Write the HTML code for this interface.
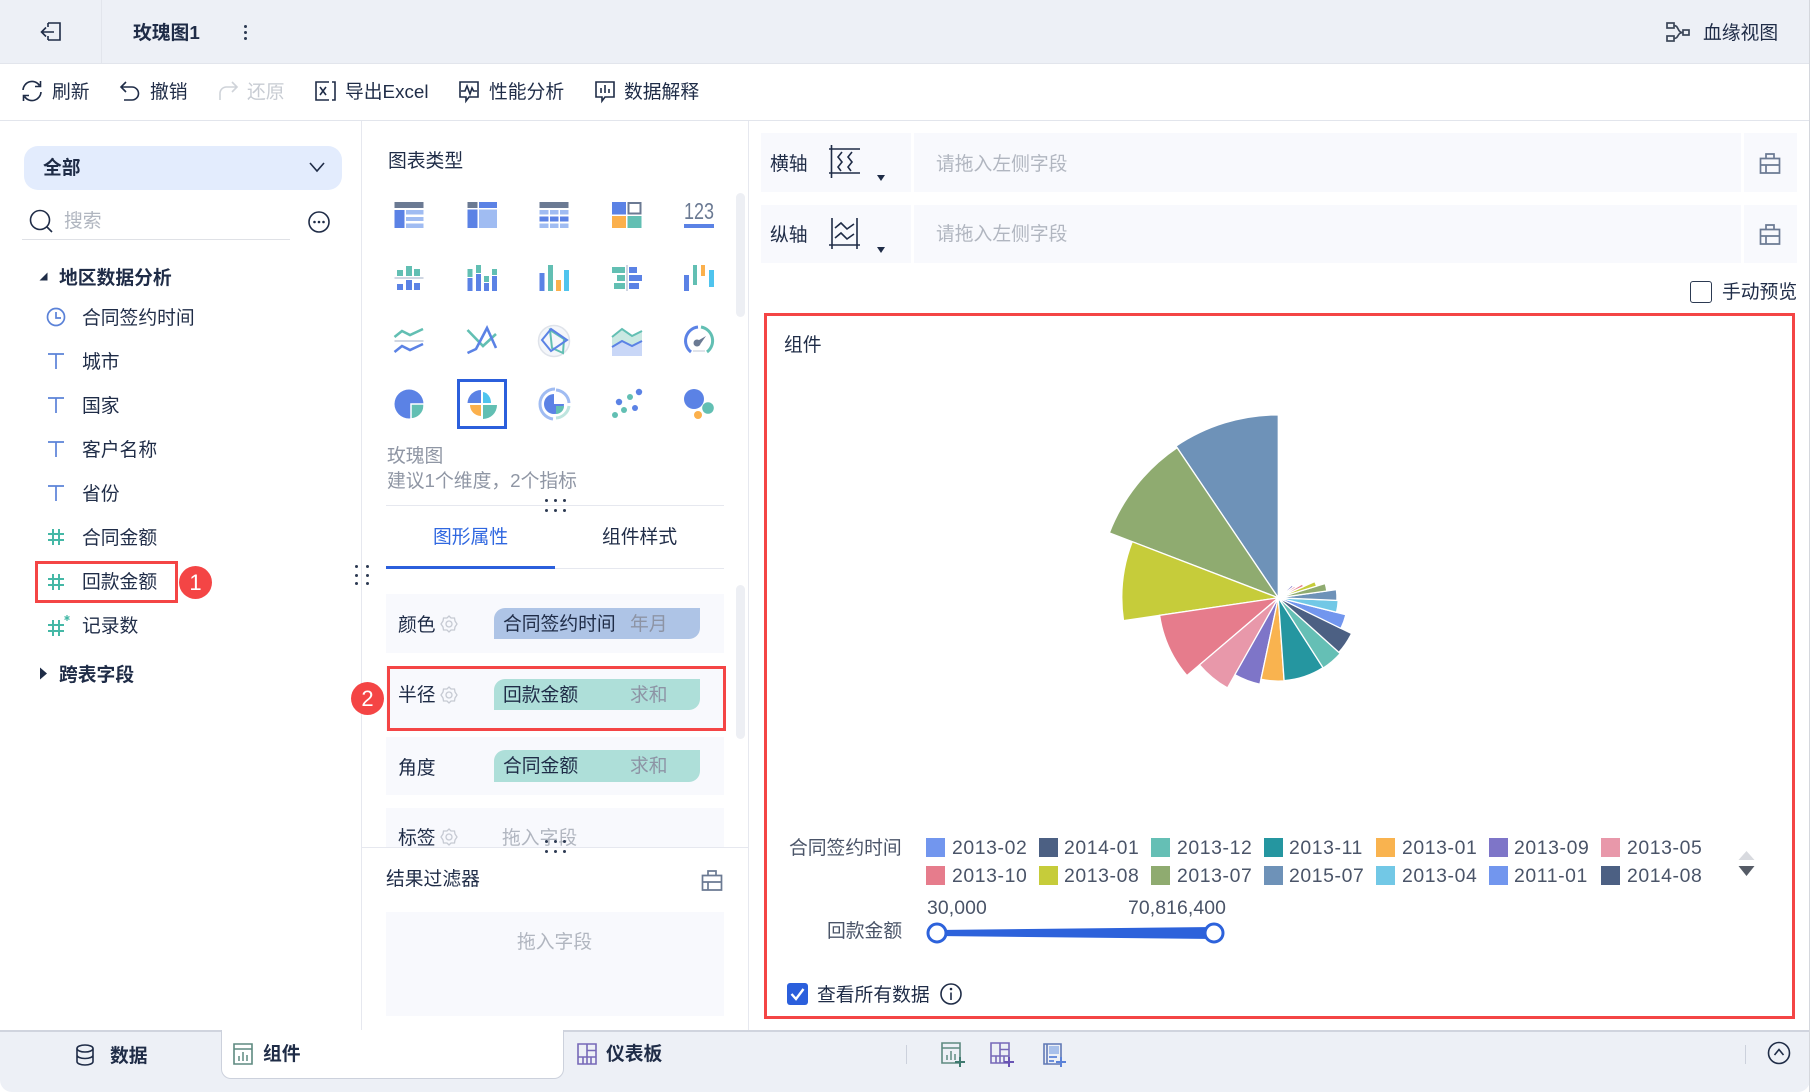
<!DOCTYPE html>
<html lang="zh"><head><meta charset="utf-8"><title>玫瑰图1</title>
<style>
html,body{margin:0;padding:0}
body{width:1810px;height:1092px;position:relative;overflow:hidden;background:#fff;font-family:"Liberation Sans","Noto Sans CJK SC",sans-serif;font-size:18.8px;color:#1f2c47}
.t{position:absolute;line-height:24px;height:24px;white-space:nowrap;margin-top:1px}
.b{font-weight:700}
.g{color:#b1b6c0}
.m{color:#8f96a4}
.r{position:absolute}
svg{position:absolute;overflow:visible}
.s{fill:none;stroke:#1f2c47;stroke-width:1.6}
.pill{position:absolute;left:494px;width:206px;border-radius:11px 0 11px 0}
.row{position:absolute;left:386px;width:338px;background:#f8f9fd}
.red{position:absolute;border:3px solid #f44545;box-sizing:border-box}
.num{position:absolute;width:33px;height:33px;border-radius:50%;background:#f44545;color:#fff;text-align:center;line-height:33px;font-size:22px;font-weight:500}
.sw{position:absolute;width:19px;height:19px}
.lg{position:absolute;line-height:24px;height:24px;white-space:nowrap;color:#4a5468;font-size:19.4px;letter-spacing:.6px;margin-top:1px}
.lv{position:absolute;line-height:24px;height:24px;white-space:nowrap;color:#4a5468;font-size:19.4px;letter-spacing:.1px;margin-top:1px}
.dot{position:absolute;width:3px;height:3px;border-radius:50%;background:#2c3a52}
</style></head><body>

<!-- header -->
<div class="r" style="left:0;top:0;width:1810px;height:63px;background:#edf0f6;border-bottom:1px solid #e2e5ec"></div>
<div class="r" style="left:101px;top:0;width:1px;height:63px;background:#e2e5ec"></div>
<svg style="left:40px;top:20px" width="24" height="24" viewBox="0 0 24 24"><path class="s" d="M8 3H20V20H8M8 3V7M8 16V20M1.500 12H14M6 7.500L1.500 12L6 16.500"/></svg>
<div class="t b" style="left:133px;top:20px">玫瑰图1</div>
<div class="dot" style="left:244px;top:25px"></div><div class="dot" style="left:244px;top:31px"></div><div class="dot" style="left:244px;top:37px"></div>
<svg style="left:1666px;top:20px" width="26" height="24" viewBox="0 0 26 24"><g class="s" style="stroke:#3c4658;stroke-width:1.7"><rect x="1" y="3" width="7" height="5"/><rect x="1" y="16" width="7" height="5"/><rect x="17" y="10" width="6" height="5"/><path d="M8 5.500C13 5.500 11 12.500 17 12.500C11 12.500 13 18.500 8 18.500"/></g></svg>
<div class="t" style="left:1703px;top:20px">血缘视图</div>

<!-- toolbar -->
<div class="r" style="left:0;top:120px;width:1810px;height:1px;background:#e2e5ec"></div>
<svg style="left:20px;top:79px" width="24" height="24" viewBox="0 0 24 24"><path class="s" d="M3 11A9 9 0 0 1 19.500 6.500M21 13A9 9 0 0 1 4.500 17.500M20.500 2V7.500H15M3.500 22V16.500H9"/></svg>
<div class="t" style="left:52px;top:79px">刷新</div>
<svg style="left:119px;top:79px" width="22" height="24" viewBox="0 0 22 24"><path class="s" d="M7 3L2 8L7 13M2 8H13A6.500 6.500 0 0 1 13 21H5"/></svg>
<div class="t" style="left:150px;top:79px">撤销</div>
<svg style="left:217px;top:79px" width="22" height="24" viewBox="0 0 22 24"><path class="s" style="stroke:#cfd3d9" d="M15 3L20 8L15 13M20 8H9A6.500 6.500 0 0 0 3 15V21"/></svg>
<div class="t" style="left:247px;top:79px;color:#c8ccd3">还原</div>
<svg style="left:314px;top:79px" width="22" height="24" viewBox="0 0 22 24"><path class="s" d="M15 3H2V21H15M18 3H21V21H18M6 8L12 16M12 8L6 16"/></svg>
<div class="t" style="left:345px;top:79px">导出Excel</div>
<svg style="left:458px;top:79px" width="22" height="24" viewBox="0 0 22 24"><path class="s" d="M2 3H20V18H11L8 22V18H2ZM3 12H7L9 7L12 15L14 9L15.500 12H19"/></svg>
<div class="t" style="left:489px;top:79px">性能分析</div>
<svg style="left:594px;top:79px" width="22" height="24" viewBox="0 0 22 24"><path class="s" d="M2 3H20V18H11L8 22V18H2ZM7 9V14M11 6V14M15 10V14"/></svg>
<div class="t" style="left:624px;top:79px">数据解释</div>

<!-- panel dividers -->
<div class="r" style="left:361px;top:121px;width:1px;height:909px;background:#e6e8ef"></div>
<div class="r" style="left:748px;top:121px;width:1px;height:909px;background:#e6e8ef"></div>

<!-- left panel -->
<div class="r" style="left:24px;top:146px;width:318px;height:44px;background:#e3ecfd;border-radius:14px"></div>
<div class="t b" style="left:43px;top:155px">全部</div>
<svg style="left:308px;top:161px" width="18" height="12" viewBox="0 0 18 12"><path class="s" d="M2 2L9 10L16 2"/></svg>
<svg style="left:29px;top:208px" width="24" height="26" viewBox="0 0 24 26"><circle class="s" cx="11" cy="12" r="9.500" stroke-width="1.8"/><path class="s" d="M18 19L23 24"/></svg>
<div class="t g" style="left:64px;top:208px">搜索</div>
<div class="r" style="left:22px;top:239px;width:268px;height:1px;background:#dfe1e6"></div>
<svg style="left:308px;top:211px" width="22" height="22" viewBox="0 0 22 22"><circle class="s" cx="11" cy="11" r="10"/><circle cx="6.500" cy="11" r="1.300" fill="#1f2c47"/><circle cx="11" cy="11" r="1.300" fill="#1f2c47"/><circle cx="15.500" cy="11" r="1.300" fill="#1f2c47"/></svg>

<svg style="left:39px;top:272px" width="9" height="9" viewBox="0 0 9 9"><path d="M8.500 0.500V8.500H0.500Z" fill="#1f2c47"/></svg>
<div class="t b" style="left:59px;top:265px">地区数据分析</div>
<svg style="left:46px;top:307px" width="20" height="20" viewBox="0 0 20 20"><circle cx="10" cy="10" r="8.500" fill="none" stroke="#5b82d8" stroke-width="1.700"/><path d="M10 5V11H15" fill="none" stroke="#5b82d8" stroke-width="1.700"/></svg>
<div class="t" style="left:82px;top:305px">合同签约时间</div>
<svg style="left:47px;top:352px" width="18" height="18" viewBox="0 0 18 18"><path d="M1 2H17M9 2V17" fill="none" stroke="#5b82d8" stroke-width="1.700"/></svg>
<div class="t" style="left:82px;top:349px">城市</div>
<svg style="left:47px;top:396px" width="18" height="18" viewBox="0 0 18 18"><path d="M1 2H17M9 2V17" fill="none" stroke="#5b82d8" stroke-width="1.700"/></svg>
<div class="t" style="left:82px;top:393px">国家</div>
<svg style="left:47px;top:440px" width="18" height="18" viewBox="0 0 18 18"><path d="M1 2H17M9 2V17" fill="none" stroke="#5b82d8" stroke-width="1.700"/></svg>
<div class="t" style="left:82px;top:437px">客户名称</div>
<svg style="left:47px;top:484px" width="18" height="18" viewBox="0 0 18 18"><path d="M1 2H17M9 2V17" fill="none" stroke="#5b82d8" stroke-width="1.700"/></svg>
<div class="t" style="left:82px;top:481px">省份</div>
<svg style="left:47px;top:528px" width="18" height="18" viewBox="0 0 18 18"><path d="M1 6H17M1 12H17M6 1V17M12 1V17" fill="none" stroke="#45b8a6" stroke-width="2"/></svg>
<div class="t" style="left:82px;top:525px">合同金额</div>
<svg style="left:47px;top:573px" width="18" height="18" viewBox="0 0 18 18"><path d="M1 6H17M1 12H17M6 1V17M12 1V17" fill="none" stroke="#45b8a6" stroke-width="2"/></svg>
<div class="t" style="left:82px;top:569px">回款金额</div>
<svg style="left:47px;top:615px" width="24" height="22" viewBox="0 0 24 22"><path d="M1 10H17M1 16H17M6 5V21M12 5V21" fill="none" stroke="#45b8a6" stroke-width="2"/><path d="M20 0V6M17.500 1.500L22.500 4.500M22.500 1.500L17.500 4.500" stroke="#45b8a6" stroke-width="1.200"/></svg>
<div class="t" style="left:82px;top:613px">记录数</div>
<svg style="left:39px;top:667px" width="9" height="13" viewBox="0 0 9 13"><path d="M1 0.500L8 6.500L1 12.500Z" fill="#1f2c47"/></svg>
<div class="t b" style="left:59px;top:662px">跨表字段</div>

<div class="red" style="left:35px;top:561px;width:143px;height:42px"></div>
<div class="num" style="left:179px;top:566px">1</div>
<div class="dot" style="left:355px;top:565px"></div><div class="dot" style="left:366px;top:565px"></div>
<div class="dot" style="left:355px;top:574px"></div><div class="dot" style="left:366px;top:574px"></div>
<div class="dot" style="left:355px;top:582px"></div><div class="dot" style="left:366px;top:582px"></div>

<!-- middle panel -->
<div class="t" style="left:388px;top:148px">图表类型</div>
<div class="r" style="left:736px;top:193px;width:9px;height:124px;background:#edeff4;border-radius:5px"></div>

<!-- chart type icons row 1 -->
<svg style="left:394px;top:200px" width="30" height="30" viewBox="0 0 30 30"><rect x="0.500" y="2" width="29" height="6" fill="#6b7a93"/><rect x="0.500" y="10" width="10" height="18" fill="#5b82e5"/><path d="M12 10H29.500V14.500H12ZM12 17H29.500V21H12ZM12 23.500H29.500V28H12Z" fill="#a0bcf2"/></svg>
<svg style="left:467px;top:200px" width="30" height="30" viewBox="0 0 30 30"><rect x="0.500" y="2" width="10" height="6" fill="#6b7a93"/><rect x="12" y="2" width="18" height="6" fill="#5b82e5"/><rect x="0.500" y="9.500" width="10" height="18.500" fill="#5b82e5"/><rect x="12" y="9.500" width="18" height="18.500" fill="#a0bcf2"/></svg>
<svg style="left:539px;top:200px" width="30" height="30" viewBox="0 0 30 30"><rect x="0.500" y="2" width="29" height="6" fill="#6b7a93"/><g fill="#a0bcf2"><rect x="0.500" y="10" width="9" height="4.500"/><rect x="11" y="10" width="8.500" height="4.500"/><rect x="21" y="10" width="8.500" height="4.500"/><rect x="0.500" y="23.500" width="9" height="4.500"/><rect x="11" y="23.500" width="8.500" height="4.500"/><rect x="21" y="23.500" width="8.500" height="4.500"/></g><g fill="#5b82e5"><rect x="0.500" y="16.500" width="9" height="5"/><rect x="11" y="16.500" width="8.500" height="5"/><rect x="21" y="16.500" width="8.500" height="5"/></g></svg>
<svg style="left:612px;top:200px" width="30" height="30" viewBox="0 0 30 30"><rect x="0" y="2" width="14" height="12.500" fill="#5b82e5"/><rect x="16.500" y="3" width="12" height="10.500" fill="none" stroke="#6b7a93" stroke-width="2"/><rect x="0" y="16" width="14" height="12" fill="#fbb04c"/><rect x="15.500" y="16" width="14" height="12" fill="#62bfb3"/></svg>
<svg style="left:684px;top:200px" width="30" height="30" viewBox="0 0 30 30"><text x="0" y="19" font-size="23" fill="#6b7a93" font-family="Liberation Sans" textLength="30" lengthAdjust="spacingAndGlyphs">123</text><rect x="0" y="24" width="30" height="4" fill="#5b82e5"/></svg>

<!-- row 2 -->
<svg style="left:394px;top:263px" width="30" height="30" viewBox="0 0 30 30"><g fill="#62bfb3"><rect x="3" y="7" width="6" height="6"/><rect x="12" y="3" width="6" height="10"/><rect x="20" y="6" width="6" height="7"/></g><rect x="0.500" y="14" width="29" height="2" fill="#cfd6e2"/><g fill="#5b82e5"><rect x="3" y="21" width="6" height="6"/><rect x="12" y="17" width="6" height="10"/><rect x="20" y="20" width="6" height="7"/></g></svg>
<svg style="left:467px;top:263px" width="30" height="30" viewBox="0 0 30 30"><g fill="#62bfb3"><rect x="0.500" y="6" width="5" height="8"/><rect x="9" y="2" width="5" height="8"/><rect x="17" y="13" width="5" height="6"/><rect x="25" y="6" width="5" height="6"/></g><g fill="#5b82e5"><rect x="0.500" y="15" width="5" height="13"/><rect x="9" y="11" width="5" height="17"/><rect x="17" y="20" width="5" height="8"/><rect x="25" y="13" width="5" height="15"/></g></svg>
<svg style="left:539px;top:263px" width="30" height="30" viewBox="0 0 30 30"><rect x="0.500" y="10" width="5" height="18" fill="#5b82e5"/><rect x="9" y="2" width="5" height="26" fill="#62bfb3"/><rect x="17" y="17" width="5" height="11" fill="#fbb04c"/><rect x="25" y="7" width="5" height="21" fill="#4fc4ee"/></svg>
<svg style="left:612px;top:263px" width="30" height="30" viewBox="0 0 30 30"><rect x="14" y="2" width="2" height="26" fill="#cfd6e2"/><g fill="#62bfb3"><rect x="0" y="4" width="13" height="6"/><rect x="5" y="12" width="8" height="6"/><rect x="2" y="20" width="11" height="6"/></g><g fill="#5b82e5"><rect x="17" y="4" width="8" height="6"/><rect x="17" y="12" width="13" height="6"/><rect x="17" y="20" width="10" height="6"/></g></svg>
<svg style="left:684px;top:263px" width="30" height="30" viewBox="0 0 30 30"><rect x="0" y="12" width="5" height="16" fill="#5b82e5"/><rect x="9" y="2" width="4" height="20" fill="#62bfb3"/><rect x="17" y="2" width="4" height="11" fill="#fbb04c"/><rect x="25" y="7" width="5" height="17" fill="#4fc4ee"/></svg>

<!-- row 3 -->
<svg style="left:394px;top:326px" width="30" height="30" viewBox="0 0 30 30"><path d="M0.500 11L8 5L16 9L29 3" fill="none" stroke="#62bfb3" stroke-width="2.600"/><rect x="0.500" y="14" width="29" height="2" fill="#cfd6e2"/><path d="M0.500 26L8 20L16 24L29 18" fill="none" stroke="#5b82e5" stroke-width="2.600"/></svg>
<svg style="left:467px;top:326px" width="30" height="30" viewBox="0 0 30 30"><path d="M0.500 4L16 20L29 8" fill="none" stroke="#62bfb3" stroke-width="2.600"/><path d="M0.500 27L9 23L20 2L29 22" fill="none" stroke="#5b82e5" stroke-width="2.600"/></svg>
<svg style="left:539px;top:326px" width="30" height="30" viewBox="0 0 30 30"><circle cx="15" cy="15" r="15.500" fill="#f4f6fa" stroke="#dfe3ea" stroke-width="1.500"/><path d="M11 4L25 13L24 27L13 22Z" fill="none" stroke="#62bfb3" stroke-width="2"/><path d="M12 3L28 14L12 25L3 14Z" fill="none" stroke="#5b82e5" stroke-width="2"/></svg>
<svg style="left:612px;top:326px" width="30" height="30" viewBox="0 0 30 30"><path d="M0 11L10 3L20 10L30 5V20L20 22L10 17L0 23Z" fill="#cae8e2"/><path d="M0 11L10 3L20 10L30 5" fill="none" stroke="#62bfb3" stroke-width="2"/><path d="M0 21L10 15L20 20L30 15V30H0Z" fill="#c9d7f7"/><path d="M0 21L10 15L20 20L30 15" fill="none" stroke="#5b82e5" stroke-width="2"/></svg>
<svg style="left:684px;top:326px" width="30" height="30" viewBox="0 0 30 30"><path d="M7 26A14 14 0 0 1 14 1" fill="none" stroke="#5b82e5" stroke-width="3"/><path d="M17 1A14 14 0 0 1 23 26" fill="none" stroke="#62bfb3" stroke-width="3"/><path d="M10 17L22 10L15 20Z" fill="#6b7a93"/><circle cx="13" cy="17" r="3.500" fill="#6b7a93"/><rect x="9" y="24" width="12" height="2" fill="#dfe3ea"/></svg>

<!-- row 4 -->
<svg style="left:394px;top:389px" width="30" height="30" viewBox="0 0 30 30"><path d="M15 15V0.500A14.500 14.500 0 1 1 0.500 15A14.500 14.500 0 0 1 15 0.500Z" fill="#5b82e5"/><path d="M17 15H30V17A14 13 0 0 1 17 30Z" fill="#62bfb3" stroke="#fff" stroke-width="1.500"/></svg>
<svg style="left:467px;top:389px" width="30" height="30" viewBox="0 0 30 30"><path d="M14 1V14H0.500A13.500 13.500 0 0 1 14 1Z" fill="#5b82e5"/><path d="M16 3V14H24A9 11 0 0 0 16 3Z" fill="#4fc4ee"/><path d="M14 16V27A11 11 0 0 1 3 16Z" fill="#fbb04c"/><path d="M16 16H30A14 14 0 0 1 16 30Z" fill="#62bfb3"/></svg>
<svg style="left:539px;top:389px" width="30" height="30" viewBox="0 0 30 30"><path d="M15 0A15 15 0 0 0 0 15A15 15 0 0 0 13 30" fill="none" stroke="#a0bcf2" stroke-width="3" transform="translate(1 0)"/><path d="M17 1A14 14 0 0 1 30 14" fill="none" stroke="#a0bcf2" stroke-width="3"/><path d="M30 17A14 14 0 0 1 17 29" fill="none" stroke="#bfe5df" stroke-width="3"/><path d="M15 15V5A10 10 0 1 0 25 15Z" fill="#5b82e5"/><path d="M17 17H25A8 8 0 0 1 17 25Z" fill="#62bfb3"/></svg>
<svg style="left:612px;top:389px" width="30" height="30" viewBox="0 0 30 30"><g fill="#5b82e5"><circle cx="7" cy="13" r="3.200"/><circle cx="27" cy="3" r="3.200"/><circle cx="23" cy="19" r="3"/></g><g fill="#62bfb3"><circle cx="18" cy="8" r="3"/><circle cx="12" cy="21" r="3"/><circle cx="3" cy="26" r="3"/></g></svg>
<svg style="left:684px;top:389px" width="30" height="30" viewBox="0 0 30 30"><circle cx="10" cy="10" r="10" fill="#5b82e5"/><circle cx="24" cy="19" r="5.800" fill="#62bfb3"/><circle cx="14" cy="26" r="4" fill="#fbb04c"/></svg>
<div class="r" style="left:457px;top:379px;width:50px;height:50px;box-sizing:border-box;border:3px solid #2b5fdc"></div>

<div class="t m" style="left:387px;top:443px">玫瑰图</div>
<div class="t m" style="left:387px;top:468px">建议1个维度，2个指标</div>
<div class="r" style="left:386px;top:505px;width:338px;height:1px;background:#e6e8ef"></div>
<div class="dot" style="left:545px;top:499px"></div><div class="dot" style="left:554px;top:499px"></div><div class="dot" style="left:563px;top:499px"></div>
<div class="dot" style="left:545px;top:509px"></div><div class="dot" style="left:554px;top:509px"></div><div class="dot" style="left:563px;top:509px"></div>

<div class="t" style="left:433px;top:524px;color:#2f67e0">图形属性</div>
<div class="t" style="left:602px;top:524px">组件样式</div>
<div class="r" style="left:386px;top:568px;width:338px;height:1px;background:#e6e8ef"></div>
<div class="r" style="left:386px;top:566px;width:169px;height:3px;background:#2b5fdc"></div>
<div class="r" style="left:736px;top:585px;width:9px;height:154px;background:#edeff4;border-radius:5px"></div>

<div class="row" style="top:594px;height:59px"></div>
<div class="row" style="top:666px;height:65px"></div>
<div class="row" style="top:737px;height:58px"></div>
<div class="row" style="top:808px;height:39px"></div>

<div class="t" style="left:398px;top:612px">颜色</div>
<svg style="left:440px;top:615px" width="18" height="18" viewBox="0 0 18 18"><path d="M9 1L11 3L14.500 3L15 6L17 9L15 12L14.500 15L11 15L9 17L7 15L3.500 15L3 12L1 9L3 6L3.500 3L7 3Z" fill="none" stroke="#c6cad3" stroke-width="1.300"/><circle cx="9" cy="9" r="3" fill="none" stroke="#c6cad3" stroke-width="1.300"/></svg>
<div class="pill" style="top:608px;height:31px;background:#aec4e6"></div>
<div class="t" style="left:503px;top:611px">合同签约时间</div>
<div class="t" style="left:630px;top:611px;color:#8d94a5">年月</div>

<div class="t" style="left:398px;top:682px">半径</div>
<svg style="left:440px;top:686px" width="18" height="18" viewBox="0 0 18 18"><path d="M9 1L11 3L14.500 3L15 6L17 9L15 12L14.500 15L11 15L9 17L7 15L3.500 15L3 12L1 9L3 6L3.500 3L7 3Z" fill="none" stroke="#c6cad3" stroke-width="1.300"/><circle cx="9" cy="9" r="3" fill="none" stroke="#c6cad3" stroke-width="1.300"/></svg>
<div class="pill" style="top:679px;height:31px;background:#aedfd9"></div>
<div class="t" style="left:503px;top:682px">回款金额</div>
<div class="t" style="left:630px;top:682px;color:#8d94a5">求和</div>

<div class="t" style="left:398px;top:755px">角度</div>
<div class="pill" style="top:750px;height:32px;background:#aedfd9"></div>
<div class="t" style="left:503px;top:753px">合同金额</div>
<div class="t" style="left:630px;top:753px;color:#8d94a5">求和</div>

<div class="t" style="left:398px;top:825px">标签</div>
<svg style="left:440px;top:828px" width="18" height="18" viewBox="0 0 18 18"><path d="M9 1L11 3L14.500 3L15 6L17 9L15 12L14.500 15L11 15L9 17L7 15L3.500 15L3 12L1 9L3 6L3.500 3L7 3Z" fill="none" stroke="#c6cad3" stroke-width="1.300"/><circle cx="9" cy="9" r="3" fill="none" stroke="#c6cad3" stroke-width="1.300"/></svg>
<div class="t g" style="left:502px;top:825px">拖入字段</div>
<div class="r" style="left:362px;top:847px;width:386px;height:1px;background:#e6e8ef"></div>
<div class="dot" style="left:545px;top:840px"></div><div class="dot" style="left:554px;top:840px"></div><div class="dot" style="left:563px;top:840px"></div>
<div class="dot" style="left:545px;top:850px"></div><div class="dot" style="left:554px;top:850px"></div><div class="dot" style="left:563px;top:850px"></div>

<div class="red" style="left:387px;top:666px;width:339px;height:65px"></div>
<div class="num" style="left:351px;top:682px">2</div>

<div class="t" style="left:386px;top:866px">结果过滤器</div>
<svg style="left:701px;top:869px" width="22" height="22" viewBox="0 0 22 22"><path d="M1.500 6.500H20.500V21H1.500ZM7 6.500V2H15V6.500M1.500 13H20.500M7 13V21" fill="none" stroke="#6b7a93" stroke-width="1.700"/></svg>
<div class="r" style="left:386px;top:912px;width:338px;height:104px;background:#f8f9fd"></div>
<div class="t g" style="left:517px;top:929px">拖入字段</div>

<!-- axes -->
<div class="r" style="left:761px;top:133px;width:150px;height:59px;background:#f8f9fd"></div>
<div class="r" style="left:914px;top:133px;width:827px;height:59px;background:#f8f9fd"></div>
<div class="r" style="left:1744px;top:133px;width:53px;height:59px;background:#f8f9fd"></div>
<div class="r" style="left:761px;top:205px;width:150px;height:58px;background:#f8f9fd"></div>
<div class="r" style="left:914px;top:205px;width:827px;height:58px;background:#f8f9fd"></div>
<div class="r" style="left:1744px;top:205px;width:53px;height:58px;background:#f8f9fd"></div>
<div class="t" style="left:770px;top:151px">横轴</div>
<div class="t" style="left:770px;top:222px">纵轴</div>
<svg style="left:829px;top:145px" width="32" height="33" viewBox="0 0 32 33"><path class="s" d="M0 4H31M0 28H31M2.500 0V33M13 7L9 12L13 17L9 22L12 26M23 7L19 12L23 17L19 22L22 26"/></svg>
<svg style="left:829px;top:218px" width="32" height="32" viewBox="0 0 32 32"><path class="s" d="M0 27H31M3 0V31M28 0V31M6 10L12 5L18 11L25 6M6 20L12 15L18 21L25 16"/></svg>
<svg style="left:877px;top:175px" width="8" height="6" viewBox="0 0 8 6"><path d="M0 0H8L4 6Z" fill="#1f2c47"/></svg>
<svg style="left:877px;top:247px" width="8" height="6" viewBox="0 0 8 6"><path d="M0 0H8L4 6Z" fill="#1f2c47"/></svg>
<div class="t g" style="left:936px;top:151px">请拖入左侧字段</div>
<div class="t g" style="left:936px;top:221px">请拖入左侧字段</div>
<svg style="left:1759px;top:152px" width="22" height="22" viewBox="0 0 22 22"><path d="M1.500 6.500H20.500V21H1.500ZM7 6.500V2H15V6.500M1.500 13H20.500M7 13V21" fill="none" stroke="#6b7a93" stroke-width="1.700"/></svg>
<svg style="left:1759px;top:223px" width="22" height="22" viewBox="0 0 22 22"><path d="M1.500 6.500H20.500V21H1.500ZM7 6.500V2H15V6.500M1.500 13H20.500M7 13V21" fill="none" stroke="#6b7a93" stroke-width="1.700"/></svg>

<div class="r" style="left:1690px;top:281px;width:22px;height:22px;box-sizing:border-box;border:1.500px solid #2c3a52;border-radius:3px"></div>
<div class="t" style="left:1722px;top:279px">手动预览</div>

<!-- chart box -->
<div class="red" style="left:764px;top:313px;width:1031px;height:706px"></div>
<div class="t" style="left:784px;top:332px">组件</div>

<svg style="left:0;top:0" width="1810" height="1092" viewBox="0 0 1810 1092">
<g transform="translate(1278.300 597.800)" stroke="#fff" stroke-width="1.300">
<path fill="#6e92b8" d="M0 0V-183A183 183 0 0 0 -102.300 -151.700Z"/>
<path fill="#8fab70" d="M0 0L-101.200 -150.100A181 181 0 0 0 -169 -64.900Z"/>
<path fill="#c6cc3a" d="M0 0L-146.100 -56.100A156.500 156.500 0 0 0 -154.800 22.900Z"/>
<path fill="#e67c8c" d="M0 0L-118.700 17.500A120 120 0 0 0 -91.400 77.800Z"/>
<path fill="#e898aa" d="M0 0L-78.800 67.100A103.500 103.500 0 0 0 -50.800 90.200Z"/>
<path fill="#7e75c8" d="M0 0L-43.400 76.900A88.300 88.300 0 0 0 -18.400 86.400Z"/>
<path fill="#f9b34f" d="M0 0L-17.300 81.500A83.300 83.300 0 0 0 5.800 83.100Z"/>
<path fill="#2596a0" d="M0 0L5.800 82.800A83 83 0 0 0 44.700 69.900Z"/>
<path fill="#65bfb5" d="M0 0L44.900 70.200A83.300 83.300 0 0 0 61.900 55.700Z"/>
<path fill="#4c6083" d="M0 0L60.600 54.500A81.500 81.500 0 0 0 73.300 35.700Z"/>
<path fill="#7296ee" d="M0 0L62.600 30.600A69.700 69.700 0 0 0 67.600 16.900Z"/>
<path fill="#72c8e6" d="M0 0L58.200 14.500A60 60 0 0 0 59.900 2.600Z"/>
<path fill="#6e92b8" d="M0 0L58.600 2.600A58.700 58.700 0 0 0 58.100 -8.200Z"/>
<path fill="#8fab70" d="M0 0L48.500 -6.800A49 49 0 0 0 46.900 -14.300Z"/>
<path fill="#c6cc3a" d="M0 0L38.300 -11.700A40 40 0 0 0 36.500 -16.300Z"/>
<path fill="#e67c8c" d="M0 0L25.300 -11.300A27.700 27.700 0 0 0 24 -13.900Z"/>
<path fill="#e898aa" d="M0 0L17.300 -10A20 20 0 0 0 16.200 -11.800Z"/>
<path fill="#7e75c8" d="M0 0L15 -11A18.500 18.500 0 0 0 13.500 -12.700Z"/>
</g>
</svg>

<!-- legend -->
<div class="t" style="left:789px;top:835px;color:#4a5468">合同签约时间</div>
<div class="sw" style="left:926px;top:838px;background:#7296ee"></div><div class="lg" style="left:952px;top:835px">2013-02</div>
<div class="sw" style="left:1039px;top:838px;background:#4c6083"></div><div class="lg" style="left:1064px;top:835px">2014-01</div>
<div class="sw" style="left:1151px;top:838px;background:#65bfb5"></div><div class="lg" style="left:1177px;top:835px">2013-12</div>
<div class="sw" style="left:1264px;top:838px;background:#2596a0"></div><div class="lg" style="left:1289px;top:835px">2013-11</div>
<div class="sw" style="left:1376px;top:838px;background:#f9b34f"></div><div class="lg" style="left:1402px;top:835px">2013-01</div>
<div class="sw" style="left:1489px;top:838px;background:#7e75c8"></div><div class="lg" style="left:1514px;top:835px">2013-09</div>
<div class="sw" style="left:1601px;top:838px;background:#e898aa"></div><div class="lg" style="left:1627px;top:835px">2013-05</div>
<div class="sw" style="left:926px;top:866px;background:#e67c8c"></div><div class="lg" style="left:952px;top:863px">2013-10</div>
<div class="sw" style="left:1039px;top:866px;background:#c6cc3a"></div><div class="lg" style="left:1064px;top:863px">2013-08</div>
<div class="sw" style="left:1151px;top:866px;background:#8fab70"></div><div class="lg" style="left:1177px;top:863px">2013-07</div>
<div class="sw" style="left:1264px;top:866px;background:#6e92b8"></div><div class="lg" style="left:1289px;top:863px">2015-07</div>
<div class="sw" style="left:1376px;top:866px;background:#72c8e6"></div><div class="lg" style="left:1402px;top:863px">2013-04</div>
<div class="sw" style="left:1489px;top:866px;background:#7296ee"></div><div class="lg" style="left:1514px;top:863px">2011-01</div>
<div class="sw" style="left:1601px;top:866px;background:#4c6083"></div><div class="lg" style="left:1627px;top:863px">2014-08</div>
<svg style="left:1738px;top:851px" width="17" height="26" viewBox="0 0 17 26"><path d="M8.500 0L16.500 9H0.500Z" fill="#d8dadf"/><path d="M0.500 15H16.500L8.500 25Z" fill="#555b66"/></svg>

<div class="lv" style="left:927px;top:895px">30,000</div>
<div class="lv" style="left:1128px;top:895px">70,816,400</div>
<div class="t" style="left:827px;top:918px;color:#4a5468">回款金额</div>
<svg style="left:0;top:0" width="1810" height="1092" viewBox="0 0 1810 1092"><path d="M937 930L1214 927V939L937 936Z" fill="#2d62db"/><circle cx="937" cy="933" r="9" fill="#fff" stroke="#2d62db" stroke-width="3"/><circle cx="1214" cy="933" r="9" fill="#fff" stroke="#2d62db" stroke-width="3"/></svg>

<div class="r" style="left:787px;top:983px;width:21px;height:22px;background:#2b5fdc;border-radius:3px"></div>
<svg style="left:787px;top:983px" width="21" height="22" viewBox="0 0 21 22"><path d="M4.500 11L9 16L16.500 6" fill="none" stroke="#fff" stroke-width="2.400"/></svg>
<div class="t" style="left:817px;top:982px">查看所有数据</div>
<svg style="left:940px;top:983px" width="22" height="22" viewBox="0 0 22 22"><circle class="s" cx="11" cy="11" r="10"/><path class="s" d="M11 9.500V17"/><circle cx="11" cy="6" r="1.300" fill="#1f2c47"/></svg>

<!-- bottom bar -->
<div class="r" style="left:0;top:1030px;width:1810px;height:62px;background:#edf0f6;border-top:2px solid #d0d4de;box-sizing:border-box;border-radius:0 0 12px 12px"></div>
<div class="r" style="left:221px;top:1030px;width:343px;height:49px;background:#fff;border:1px solid #ccd1dc;border-top:0;border-radius:0 0 10px 10px;box-sizing:border-box"></div>
<svg style="left:75px;top:1044px" width="20" height="22" viewBox="0 0 20 22"><g class="s"><ellipse cx="10" cy="4.500" rx="8" ry="3.500"/><path d="M2 4.500V17.500C2 19.500 5.500 21 10 21S18 19.500 18 17.500V4.500M2 11C2 13 5.500 14.500 10 14.500S18 13 18 11"/></g></svg>
<div class="t b" style="left:110px;top:1043px">数据</div>
<svg style="left:233px;top:1043px" width="20" height="22" viewBox="0 0 20 22"><path d="M1 1H19V21H1ZM1 6H19" fill="none" stroke="#5e8a80" stroke-width="1.600"/><path d="M6 18V13M10 18V9M14 18V12" stroke="#5e8a80" stroke-width="1.500"/></svg>
<div class="t b" style="left:263px;top:1041px">组件</div>
<svg style="left:577px;top:1043px" width="20" height="22" viewBox="0 0 20 22"><path d="M1 1H19V21H1ZM1 14H19M10 1V21M10 7.500H19M6 14V21M14 14V21" fill="none" stroke="#7769b8" stroke-width="1.600"/></svg>
<div class="t b" style="left:606px;top:1041px">仪表板</div>
<div class="r" style="left:906px;top:1045px;width:1px;height:19px;background:#ccd1dc"></div>
<svg style="left:941px;top:1042px" width="24" height="25" viewBox="0 0 24 25"><path d="M1 1H19V21H1ZM1 6H19" fill="none" stroke="#5e8a80" stroke-width="1.600"/><path d="M6 18V13M10 18V9M14 18V12" stroke="#5e8a80" stroke-width="1.500"/><path d="M14 20H24M19 15V25" stroke="#3f7a70" stroke-width="2"/></svg>
<svg style="left:990px;top:1042px" width="24" height="25" viewBox="0 0 24 25"><path d="M1 1H19V21H1ZM1 14H19M10 1V21M10 7.500H19M6 14V21M14 14V21" fill="none" stroke="#7769b8" stroke-width="1.600"/><path d="M14 20H24M19 15V25" stroke="#6a55b5" stroke-width="2"/></svg>
<svg style="left:1043px;top:1043px" width="24" height="24" viewBox="0 0 24 24"><path d="M1 1H18V21H1ZM4 1V21" fill="none" stroke="#6079b5" stroke-width="1.600"/><rect x="6" y="3" width="10" height="8" fill="#a8c0ea"/><path d="M6 14H14M6 18H11" stroke="#5b82d8" stroke-width="1.800"/><path d="M13 19H23M18 14V24" stroke="#5b82d8" stroke-width="2"/></svg>
<div class="r" style="left:1745px;top:1045px;width:1px;height:19px;background:#ccd1dc"></div>
<svg style="left:1768px;top:1042px" width="22" height="22" viewBox="0 0 22 22"><circle class="s" cx="11" cy="11" r="10.500"/><path class="s" d="M6.500 13L11 7.500L15.500 13"/></svg>

<div class="r" style="left:1809px;top:0;width:1px;height:1092px;background:#d4d7dd"></div>
</body></html>
